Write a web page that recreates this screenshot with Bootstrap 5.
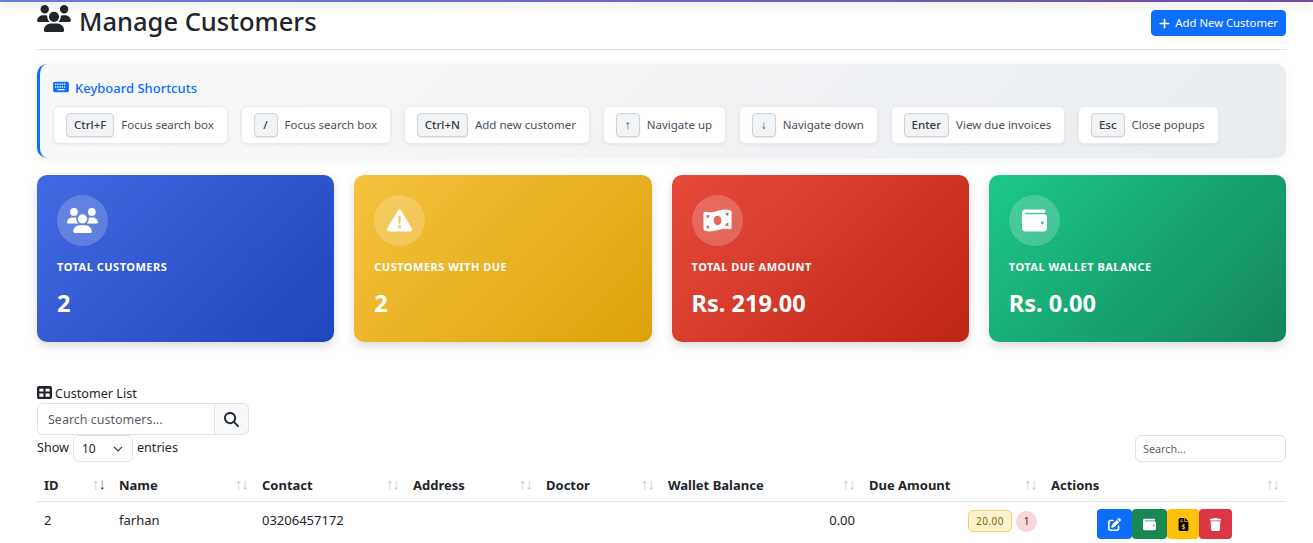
<!DOCTYPE html>
<html lang="en">
  <head>
    <meta charset="UTF-8" />
    <meta name="viewport" content="width=device-width, initial-scale=1" />
    <title>Manage Customers</title>
    <link href="https://cdn.jsdelivr.net/npm/bootstrap@5.3.0/dist/css/bootstrap.min.css" rel="stylesheet" />
    <style>
      body {
        font-family: "Noto Sans", "Open Sans", sans-serif;
        font-size: 14px;
        color: #212529;
        background: #fff;
      }
      svg { fill: currentColor; display: inline-block; }

      .top-strip {
        height: 2px;
        background: linear-gradient(90deg, #667eea, #764ba2);
        box-shadow: 0 3px 10px rgba(0, 0, 0, 0.25);
      }
      .page-wrap { padding: 0 27px 0 37px; }

      .page-head { height: 48px; padding-top: 3px; border-bottom: 1px solid #dee2e6; }
      .page-title { font-size: 25.5px; font-weight: 500; line-height: 32px; margin: 0; }
      .page-title svg { width: 34px; height: 27px; margin-right: 8px; vertical-align: -1px; }
      .btn-add { font-size: 11.3px; padding: 0 7px; height: 26px; line-height: 24px; margin-top: 5px; border-radius: 4px; }
      .btn-add svg { width: 11px; height: 13px; margin-right: 5px; vertical-align: -3px; }

      .keys-box {
        margin-top: 14px;
        height: 94px;
        padding: 15px 16px 0 13px;
        border-left: 3px solid #0d6efd;
        border-radius: 10px;
        background: linear-gradient(135deg, #f8f9fa, #e9ecef);
        box-shadow: 0 2px 10px rgba(0, 0, 0, 0.06);
      }
      .keys-title { font-size: 13px; font-weight: 500; color: #0d6efd; line-height: 18px; margin-bottom: 9px; }
      .keys-title svg { width: 16px; height: 14px; margin-right: 6px; vertical-align: -1px; }
      .keys-row { gap: 12.7px; }
      .key-item {
        height: 38px;
        padding: 0 13px 0 12px;
        background: #fff;
        border: 1px solid #e9ecef;
        border-radius: 6px;
        box-shadow: 0 1px 3px rgba(0, 0, 0, 0.06);
        font-size: 11.5px;
        white-space: nowrap;
        color: #495057;
      }
      .key-cap {
        min-width: 24px;
        height: 24px;
        line-height: 22px;
        padding: 0 7px;
        margin-right: 7px;
        text-align: center;
        font-size: 11.5px;
        font-weight: 500;
        color: #343a40;
        background: #f1f3f5;
        border: 1px solid #ced4da;
        border-radius: 4px;
        box-shadow: 0 1px 1px rgba(0, 0, 0, 0.08);
      }

      .stat-grid { display: grid; grid-template-columns: repeat(4, 1fr); gap: 20px; margin-top: 17px; }
      .stat-tile {
        height: 167px;
        padding: 20px;
        border-radius: 10px;
        color: #fff;
        box-shadow: 0 4px 10px rgba(0, 0, 0, 0.14);
      }
      .tile-blue { background: linear-gradient(135deg, #4169e1, #2046bd); }
      .tile-amber { background: linear-gradient(135deg, #f6c23e, #dda20a); }
      .tile-red { background: linear-gradient(135deg, #e74a3b, #be2617); }
      .tile-green { background: linear-gradient(135deg, #1cc88a, #13855c); }
      .stat-icon {
        width: 51px;
        height: 51px;
        background: rgba(255, 255, 255, 0.2);
        border-radius: 50%;
      }
      .stat-icon svg { height: 25px; width: 31px; }
      .stat-label {
        margin-top: 13px;
        font-size: 11px;
        font-weight: 700;
        line-height: 16px;
        letter-spacing: 0.5px;
        text-transform: uppercase;
      }
      .stat-value { margin-top: 13px; font-size: 23.6px; font-weight: 700; line-height: 30px; }

      .list-title { margin-top: 42px; line-height: 19px; font-size: 12.6px; }
      .list-title svg { width: 15px; height: 15px; margin-right: 3px; vertical-align: -2px; }
      .search-group { width: 212px; height: 32px; }
      .search-group .form-control { font-size: 12.5px; padding: 2px 10px 0; border-radius: 6px 0 0 6px; }
      .search-btn {
        width: 35px;
        border: 1px solid #dee2e6;
        border-left: 0;
        border-radius: 0 6px 6px 0;
        background: #f8f9fa;
        color: #212529;
      }
      .search-btn svg { width: 15px; height: 15px; }
      .len-row { height: 27px; margin-bottom: 6px; font-size: 12.6px; }
      .len-select {
        width: 60px;
        height: 27px;
        padding: 0 8px;
        margin: 0 4px;
        font-size: 12px;
        background-position: right 8px center;
        background-size: 12px 10px;
      }
      .dt-search { width: 151px; height: 27px; font-size: 10.8px; padding: 0 7px; }

      .cust-table { table-layout: fixed; width: 1249px; margin: 0; font-size: 13px; }
      .cust-table th { font-weight: 700; padding: 7px 7px 6px; line-height: 20px; position: relative; border-bottom: 1px solid #dee2e6; }
      .cust-table td { padding: 8px 7px 7px; line-height: 20px; border: 0; vertical-align: top; }
      .cust-table td.act-cell { padding-top: 7px; }
      .sort-arrows {
        position: absolute;
        right: 7px;
        top: 5px;
        font-weight: 400;
        font-size: 15px;
        letter-spacing: -1px;
        color: #c3c7cc;
      }
      .sort-on { color: #495057; }
      .col-id { width: 75px; }
      .col-name { width: 143px; }
      .col-contact { width: 151px; }
      .col-address { width: 133px; }
      .col-doctor { width: 122px; }
      .col-wallet { width: 201px; }
      .col-due { width: 182px; }
      .due-cell { display: flex; justify-content: flex-end; align-items: center; gap: 4px; }
      .due-pill {
        font-size: 10px;
        letter-spacing: 0.5px;
        color: #856404;
        background: #fff3cd;
        border: 1px solid #f0cf6b;
        border-radius: 5px;
        padding: 0 7px;
        height: 22px;
        line-height: 20px;
      }
      .due-count {
        width: 21px;
        height: 21px;
        line-height: 21px;
        text-align: center;
        border-radius: 50%;
        font-size: 10px;
        color: #58151c;
        background: #f8d7da;
      }
      .act-btn {
        width: 35px;
        height: 30px;
        padding: 0;
        border: 0;
        border-radius: 4px;
        display: inline-flex;
        align-items: center;
        justify-content: center;
      }
      .act-btn.btn-warning { width: 32px; }
      .act-btn.btn-danger { width: 33px; }
      .act-btn svg { width: 13px; height: 13px; }
      .act-set { margin-left: 46px; }
    </style>
  </head>

  <body>
    <div class="top-strip"></div>
    <div class="page-wrap">
      <!-- Heading -->
      <div class="page-head d-flex justify-content-between align-items-start">
        <h1 class="page-title">
          <svg viewBox="0 0 640 512"><path d="M144 0a80 80 0 1 1 0 160A80 80 0 1 1 144 0zM512 0a80 80 0 1 1 0 160A80 80 0 1 1 512 0zM0 298.700C0 239.800 47.800 192 106.700 192h42.700c15.900 0 31 3.500 44.600 9.700c-1.300 7.200-1.900 14.700-1.900 22.300c0 38.200 16.800 72.500 43.300 96c-.2 0-.4 0-.7 0H21.300C9.600 320 0 310.400 0 298.700zM405.300 320c-.2 0-.4 0-.7 0c26.600-23.500 43.300-57.800 43.300-96c0-7.600-.7-15-1.900-22.300c13.600-6.300 28.700-9.700 44.600-9.700h42.700C592.200 192 640 239.800 640 298.700c0 11.800-9.600 21.300-21.300 21.300H405.300zM224 224a96 96 0 1 1 192 0 96 96 0 1 1 -192 0zM128 485.300C128 411.700 187.700 352 261.300 352H378.700C452.300 352 512 411.700 512 485.300c0 14.700-11.900 26.700-26.700 26.700H154.700c-14.700 0-26.700-11.900-26.700-26.700z"/></svg>Manage Customers
        </h1>
        <button class="btn btn-primary btn-add">
          <svg viewBox="0 0 448 512"><path d="M256 80c0-17.700-14.300-32-32-32s-32 14.300-32 32V224H48c-17.700 0-32 14.300-32 32s14.300 32 32 32H192V432c0 17.700 14.300 32 32 32s32-14.300 32-32V288H400c17.700 0 32-14.300 32-32s-14.300-32-32-32H256V80z"/></svg>Add New Customer
        </button>
      </div>

      <!-- Keyboard shortcuts -->
      <div class="keys-box">
        <div class="keys-title">
          <svg viewBox="0 0 576 512"><path fill-rule="evenodd" d="M64 64C28.700 64 0 92.700 0 128V384c0 35.300 28.700 64 64 64H512c35.300 0 64-28.700 64-64V128c0-35.300-28.700-64-64-64H64zM72 128h48v56H72zm80 0h48v56h-48zm80 0h48v56h-48zm80 0h48v56h-48zm80 0h48v56h-48zm-320 96h48v56H72zm80 0h48v56h-48zm80 0h48v56h-48zm80 0h48v56h-48zm80 0h48v56h-48zM160 328h256v48H160z"/></svg>Keyboard Shortcuts
        </div>
        <div class="d-flex keys-row">
          <div class="key-item d-flex align-items-center"><span class="key-cap">Ctrl+F</span>Focus search box</div>
          <div class="key-item d-flex align-items-center"><span class="key-cap">/</span>Focus search box</div>
          <div class="key-item d-flex align-items-center"><span class="key-cap">Ctrl+N</span>Add new customer</div>
          <div class="key-item d-flex align-items-center"><span class="key-cap">↑</span>Navigate up</div>
          <div class="key-item d-flex align-items-center"><span class="key-cap">↓</span>Navigate down</div>
          <div class="key-item d-flex align-items-center"><span class="key-cap">Enter</span>View due invoices</div>
          <div class="key-item d-flex align-items-center"><span class="key-cap">Esc</span>Close popups</div>
        </div>
      </div>

      <!-- Stats -->
      <div class="stat-grid">
        <div class="stat-tile tile-blue">
          <div class="stat-icon d-flex align-items-center justify-content-center">
            <svg viewBox="0 0 640 512"><path d="M144 0a80 80 0 1 1 0 160A80 80 0 1 1 144 0zM512 0a80 80 0 1 1 0 160A80 80 0 1 1 512 0zM0 298.700C0 239.800 47.800 192 106.700 192h42.700c15.900 0 31 3.500 44.600 9.700c-1.300 7.200-1.900 14.700-1.900 22.300c0 38.200 16.800 72.500 43.300 96c-.2 0-.4 0-.7 0H21.300C9.600 320 0 310.400 0 298.700zM405.300 320c-.2 0-.4 0-.7 0c26.600-23.500 43.300-57.800 43.300-96c0-7.600-.7-15-1.900-22.300c13.600-6.300 28.700-9.700 44.600-9.700h42.700C592.200 192 640 239.800 640 298.700c0 11.800-9.600 21.300-21.300 21.300H405.300zM224 224a96 96 0 1 1 192 0 96 96 0 1 1 -192 0zM128 485.300C128 411.700 187.700 352 261.300 352H378.700C452.300 352 512 411.700 512 485.300c0 14.700-11.900 26.700-26.700 26.700H154.700c-14.700 0-26.700-11.900-26.700-26.700z"/></svg>
          </div>
          <div class="stat-label">Total Customers</div>
          <div class="stat-value">2</div>
        </div>
        <div class="stat-tile tile-amber">
          <div class="stat-icon d-flex align-items-center justify-content-center">
            <svg viewBox="0 0 512 512"><path d="M256 32c14.200 0 27.300 7.500 34.500 19.800l216 368c7.300 12.400 7.300 27.700 .2 40.100S486.300 480 472 480H40c-14.300 0-27.600-7.700-34.700-20.100s-7-27.800 .2-40.100l216-368C228.700 39.500 241.800 32 256 32zm0 128c-13.300 0-24 10.700-24 24V296c0 13.300 10.700 24 24 24s24-10.700 24-24V184c0-13.300-10.700-24-24-24zm32 224a32 32 0 1 0 -64 0 32 32 0 1 0 64 0z"/></svg>
          </div>
          <div class="stat-label">Customers With Due</div>
          <div class="stat-value">2</div>
        </div>
        <div class="stat-tile tile-red">
          <div class="stat-icon d-flex align-items-center justify-content-center">
            <svg viewBox="0 0 576 512"><path d="M0 112.500V422.300c0 18 10.100 35 27 41.300c87 32.500 174 10.300 261-11.900c79.800-20.300 159.600-40.700 239.300-18.900c23 6.300 48.700-9.500 48.700-33.400V89.700c0-18-10.100-35-27-41.300C462 15.900 375 38.100 288 60.300C208.200 80.600 128.400 100.900 48.700 79.100C25.600 72.800 0 88.600 0 112.500zM288 352c-44.200 0-80-43-80-96s35.800-96 80-96s80 43 80 96s-35.800 96-80 96zM64 352c35.300 0 64 28.700 64 64H64V352zm64-208c0 35.300-28.700 64-64 64V144h64zM512 304v64H448c0-35.300 28.700-64 64-64zM448 96h64v64c-35.300 0-64-28.700-64-64z"/></svg>
          </div>
          <div class="stat-label">Total Due Amount</div>
          <div class="stat-value">Rs. 219.00</div>
        </div>
        <div class="stat-tile tile-green">
          <div class="stat-icon d-flex align-items-center justify-content-center">
            <svg viewBox="0 0 512 512"><path d="M64 32C28.700 32 0 60.700 0 96V416c0 35.300 28.700 64 64 64H448c35.300 0 64-28.700 64-64V192c0-35.300-28.700-64-64-64H80c-8.800 0-16-7.200-16-16s7.200-16 16-16H448c17.700 0 32-14.300 32-32s-14.300-32-32-32H64zM416 272a32 32 0 1 1 0 64 32 32 0 1 1 0-64z"/></svg>
          </div>
          <div class="stat-label">Total Wallet Balance</div>
          <div class="stat-value">Rs. 0.00</div>
        </div>
      </div>

      <!-- Customer list -->
      <div class="list-title">
        <svg viewBox="0 0 512 512"><path fill-rule="evenodd" d="M64 32C28.700 32 0 60.700 0 96V416c0 35.300 28.700 64 64 64H448c35.300 0 64-28.700 64-64V96c0-35.300-28.700-64-64-64H64zM432 128V224H292V128H432zm0 160V400H292V288H432zM220 224H80V128H220V224zM80 288H220V400H80V288z"/></svg>Customer List
      </div>
      <div class="input-group search-group">
        <input type="text" class="form-control" placeholder="Search customers..." />
        <button class="search-btn d-flex align-items-center justify-content-center">
          <svg viewBox="0 0 512 512"><path d="M416 208c0 45.900-14.900 88.300-40 122.700L502.600 457.400c12.500 12.500 12.500 32.800 0 45.300s-32.800 12.500-45.300 0L330.700 376c-34.400 25.200-76.800 40-122.700 40C93.100 416 0 322.900 0 208S93.100 0 208 0S416 93.100 416 208zM208 352a144 144 0 1 0 0-288 144 144 0 1 0 0 288z"/></svg>
        </button>
      </div>
      <div class="len-row d-flex justify-content-between">
        <div class="d-flex align-items-center">
          Show
          <select class="form-select len-select"><option>10</option></select>
          entries
        </div>
        <input type="text" class="form-control dt-search" placeholder="Search..." />
      </div>

      <table class="table cust-table">
        <thead>
          <tr>
            <th class="col-id">ID<span class="sort-arrows">↑<span class="sort-on">↓</span></span></th>
            <th class="col-name">Name<span class="sort-arrows">↑↓</span></th>
            <th class="col-contact">Contact<span class="sort-arrows">↑↓</span></th>
            <th class="col-address">Address<span class="sort-arrows">↑↓</span></th>
            <th class="col-doctor">Doctor<span class="sort-arrows">↑↓</span></th>
            <th class="col-wallet">Wallet Balance<span class="sort-arrows">↑↓</span></th>
            <th class="col-due">Due Amount<span class="sort-arrows">↑↓</span></th>
            <th>Actions<span class="sort-arrows">↑↓</span></th>
          </tr>
        </thead>
        <tbody>
          <tr>
            <td>2</td>
            <td>farhan</td>
            <td>03206457172</td>
            <td></td>
            <td></td>
            <td class="text-end">0.00</td>
            <td>
              <div class="due-cell"><span class="due-pill">20.00</span><span class="due-count">1</span></div>
            </td>
            <td class="act-cell">
              <div class="act-set d-flex">
                <button class="btn btn-primary act-btn"><svg viewBox="0 0 512 512"><path d="M471.600 21.700c-21.900-21.900-57.300-21.900-79.200 0L362.300 51.700l97.900 97.900 30.100-30.100c21.900-21.900 21.900-57.300 0-79.200L471.600 21.700zm-299.200 220c-6.100 6.100-10.800 13.600-13.500 21.900l-29.600 88.800c-2.900 8.600-.6 18.100 5.800 24.600s15.900 8.700 24.600 5.800l88.800-29.600c8.200-2.700 15.700-7.400 21.900-13.500L437.700 172.300 339.700 74.300 172.400 241.700zM96 64C43 64 0 107 0 160V416c0 53 43 96 96 96H352c53 0 96-43 96-96V320c0-17.700-14.300-32-32-32s-32 14.300-32 32v96c0 17.700-14.300 32-32 32H96c-17.700 0-32-14.300-32-32V160c0-17.700 14.300-32 32-32h96c17.700 0 32-14.300 32-32s-14.300-32-32-32H96z"/></svg></button>
                <button class="btn btn-success act-btn"><svg viewBox="0 0 512 512"><path d="M64 32C28.700 32 0 60.700 0 96V416c0 35.300 28.700 64 64 64H448c35.300 0 64-28.700 64-64V192c0-35.300-28.700-64-64-64H80c-8.800 0-16-7.200-16-16s7.200-16 16-16H448c17.700 0 32-14.300 32-32s-14.300-32-32-32H64zM416 272a32 32 0 1 1 0 64 32 32 0 1 1 0-64z"/></svg></button>
                <button class="btn btn-warning act-btn"><svg viewBox="0 0 384 512"><path d="M64 0C28.700 0 0 28.700 0 64V448c0 35.300 28.700 64 64 64H320c35.300 0 64-28.700 64-64V160H256c-17.700 0-32-14.300-32-32V0H64zM256 0V128H384L256 0z"/><rect x="64" y="64" width="96" height="32" fill="#ffc107"/><rect x="64" y="128" width="96" height="32" fill="#ffc107"/><text x="192" y="430" text-anchor="middle" font-size="260" font-weight="700" fill="#ffc107">$</text></svg></button>
                <button class="btn btn-danger act-btn"><svg viewBox="0 0 448 512"><path d="M135.200 17.700L128 32H32C14.300 32 0 46.300 0 64S14.300 96 32 96H416c17.700 0 32-14.300 32-32s-14.300-32-32-32H320l-7.200-14.300C307.400 6.800 296.300 0 284.200 0H163.800c-12.100 0-23.200 6.800-28.600 17.700zM416 128H32L53.200 467c1.600 25.300 22.600 45 47.900 45H346.900c25.300 0 46.300-19.700 47.900-45L416 128z"/></svg></button>
              </div>
            </td>
          </tr>
        </tbody>
      </table>
    </div>

    <script src="https://cdn.jsdelivr.net/npm/bootstrap@5.3.0/dist/js/bootstrap.bundle.min.js"></script>
  </body>
</html>
